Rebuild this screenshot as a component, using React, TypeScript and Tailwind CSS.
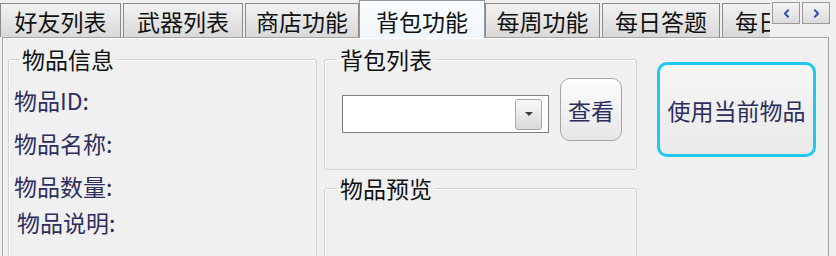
import { ChevronLeft, ChevronRight } from "lucide-react";

const tabs = [
  { label: "好友列表", w: "w-[121px]" },
  { label: "武器列表", w: "w-[120px]" },
  { label: "商店功能", w: "w-[114px]" },
  { label: "背包功能", w: "w-[126px]", active: true },
  { label: "每周功能", w: "w-[115px]" },
  { label: "每日答题", w: "w-[118px]" },
  { label: "每日签到", w: "w-[118px]" },
];

const fieldLabels = [
  { text: "物品ID:", cls: "mt-[13px] pl-[5px]" },
  { text: "物品名称:", cls: "mt-[15px] pl-[5px]" },
  { text: "物品数量:", cls: "mt-[15px] pl-[5px]" },
  { text: "物品说明:", cls: "mt-[8px] pl-[8px]" },
];

export default function App() {
  return (
    <div className="w-[836px] h-[256px] overflow-hidden bg-[#f0f0f0] font-['Noto_Sans_CJK_SC',sans-serif] text-[23px] leading-[28px] text-[#111]">
      {/* Tab strip */}
      <div className="relative h-[37px] flex">
        <div className="w-[770px] h-[38px] overflow-hidden flex items-end gap-[2px] relative z-10">
          {tabs.map((t) =>
            t.active ? (
              <div
                key={t.label}
                className={`${t.w} shrink-0 h-[40px] -mb-[2px] -mx-[2px] flex items-center justify-center border border-b-0 border-[#8f9aa5] bg-gradient-to-b from-[#fbfdff] to-[#eef5fa]`}
              >
                {t.label}
              </div>
            ) : (
              <div
                key={t.label}
                className={`${t.w} shrink-0 h-[34px] mb-[1px] flex items-center justify-center border border-b-0 border-[#8a8a8a] bg-gradient-to-b from-[#f2f2f2] to-[#d9d9d9]`}
              >
                {t.label}
              </div>
            )
          )}
        </div>
        <div className="flex gap-[2px] ml-[2px] mt-[2px] h-[22px]">
          <button className="w-[28px] h-[22px] flex items-center justify-center border border-[#9a9a9a] bg-gradient-to-b from-[#f4f4f4] to-[#dcdcdc]">
            <ChevronLeft size={13} strokeWidth={3.5} className="text-[#2a4fb0]" />
          </button>
          <button className="w-[28px] h-[22px] flex items-center justify-center border border-[#9a9a9a] bg-gradient-to-b from-[#f4f4f4] to-[#dcdcdc]">
            <ChevronRight size={13} strokeWidth={3.5} className="text-[#2a4fb0]" />
          </button>
        </div>
      </div>

      {/* Tab page */}
      <div className="ml-[2px] w-[827px] h-[240px] border border-[#a3a3a3] bg-[#f0f0f0] shadow-[inset_1px_1px_0_#fff] flex items-start pl-[5px] pt-[7px]">
        {/* 物品信息 */}
        <fieldset className="w-[309px] h-[260px] border border-[#d2d2d2] rounded-[3px] shadow-[inset_1px_1px_0_#fff] px-0">
          <legend className="ml-[10px] px-[3px] leading-[28px]">物品信息</legend>
          {fieldLabels.map((f) => (
            <div key={f.text} className={`${f.cls} text-[#2e2e5e]`}>
              {f.text}
            </div>
          ))}
        </fieldset>

        {/* middle column */}
        <div className="ml-[7px] w-[313px] flex flex-col gap-[4px]">
          <fieldset className="h-[125px] border border-[#d2d2d2] rounded-[3px] shadow-[inset_1px_1px_0_#fff]">
            <legend className="ml-[12px] px-[3px] leading-[28px]">背包列表</legend>
            <div className="flex items-start pl-[17px]">
              <div className="mt-[22px] w-[207px] h-[38px] bg-white border border-[#7f7f7f] flex items-center justify-end pr-[6px]">
                <div className="w-[27px] h-[31px] rounded-[3px] border border-[#a7a7a7] bg-gradient-to-b from-[#fbfbfb] to-[#d8d8d8] flex items-center justify-center">
                  <div className="w-0 h-0 border-l-[4px] border-r-[4px] border-t-[4px] border-l-transparent border-r-transparent border-t-[#3a3a3a]" />
                </div>
              </div>
              <button className="ml-[11px] mt-[5px] w-[62px] h-[63px] rounded-[10px] border border-[#a5a5a5] bg-gradient-to-b from-[#fdfdfd] to-[#e6e6e6] text-[#2e2e5e] leading-[28px]">
                查看
              </button>
            </div>
          </fieldset>
          <fieldset className="h-[90px] border border-[#d2d2d2] rounded-[3px] shadow-[inset_1px_1px_0_#fff]">
            <legend className="ml-[12px] px-[3px] leading-[28px]">物品预览</legend>
          </fieldset>
        </div>

        {/* action button */}
        <button className="ml-[20px] mt-[17px] w-[159px] h-[95px] rounded-[10px] border-[3px] border-[#1ec8f2] bg-gradient-to-b from-[#f6f6f6] to-[#e9e9e9] text-[#2e2e5e] leading-[28px]">
          使用当前物品
        </button>
      </div>
    </div>
  );
}
